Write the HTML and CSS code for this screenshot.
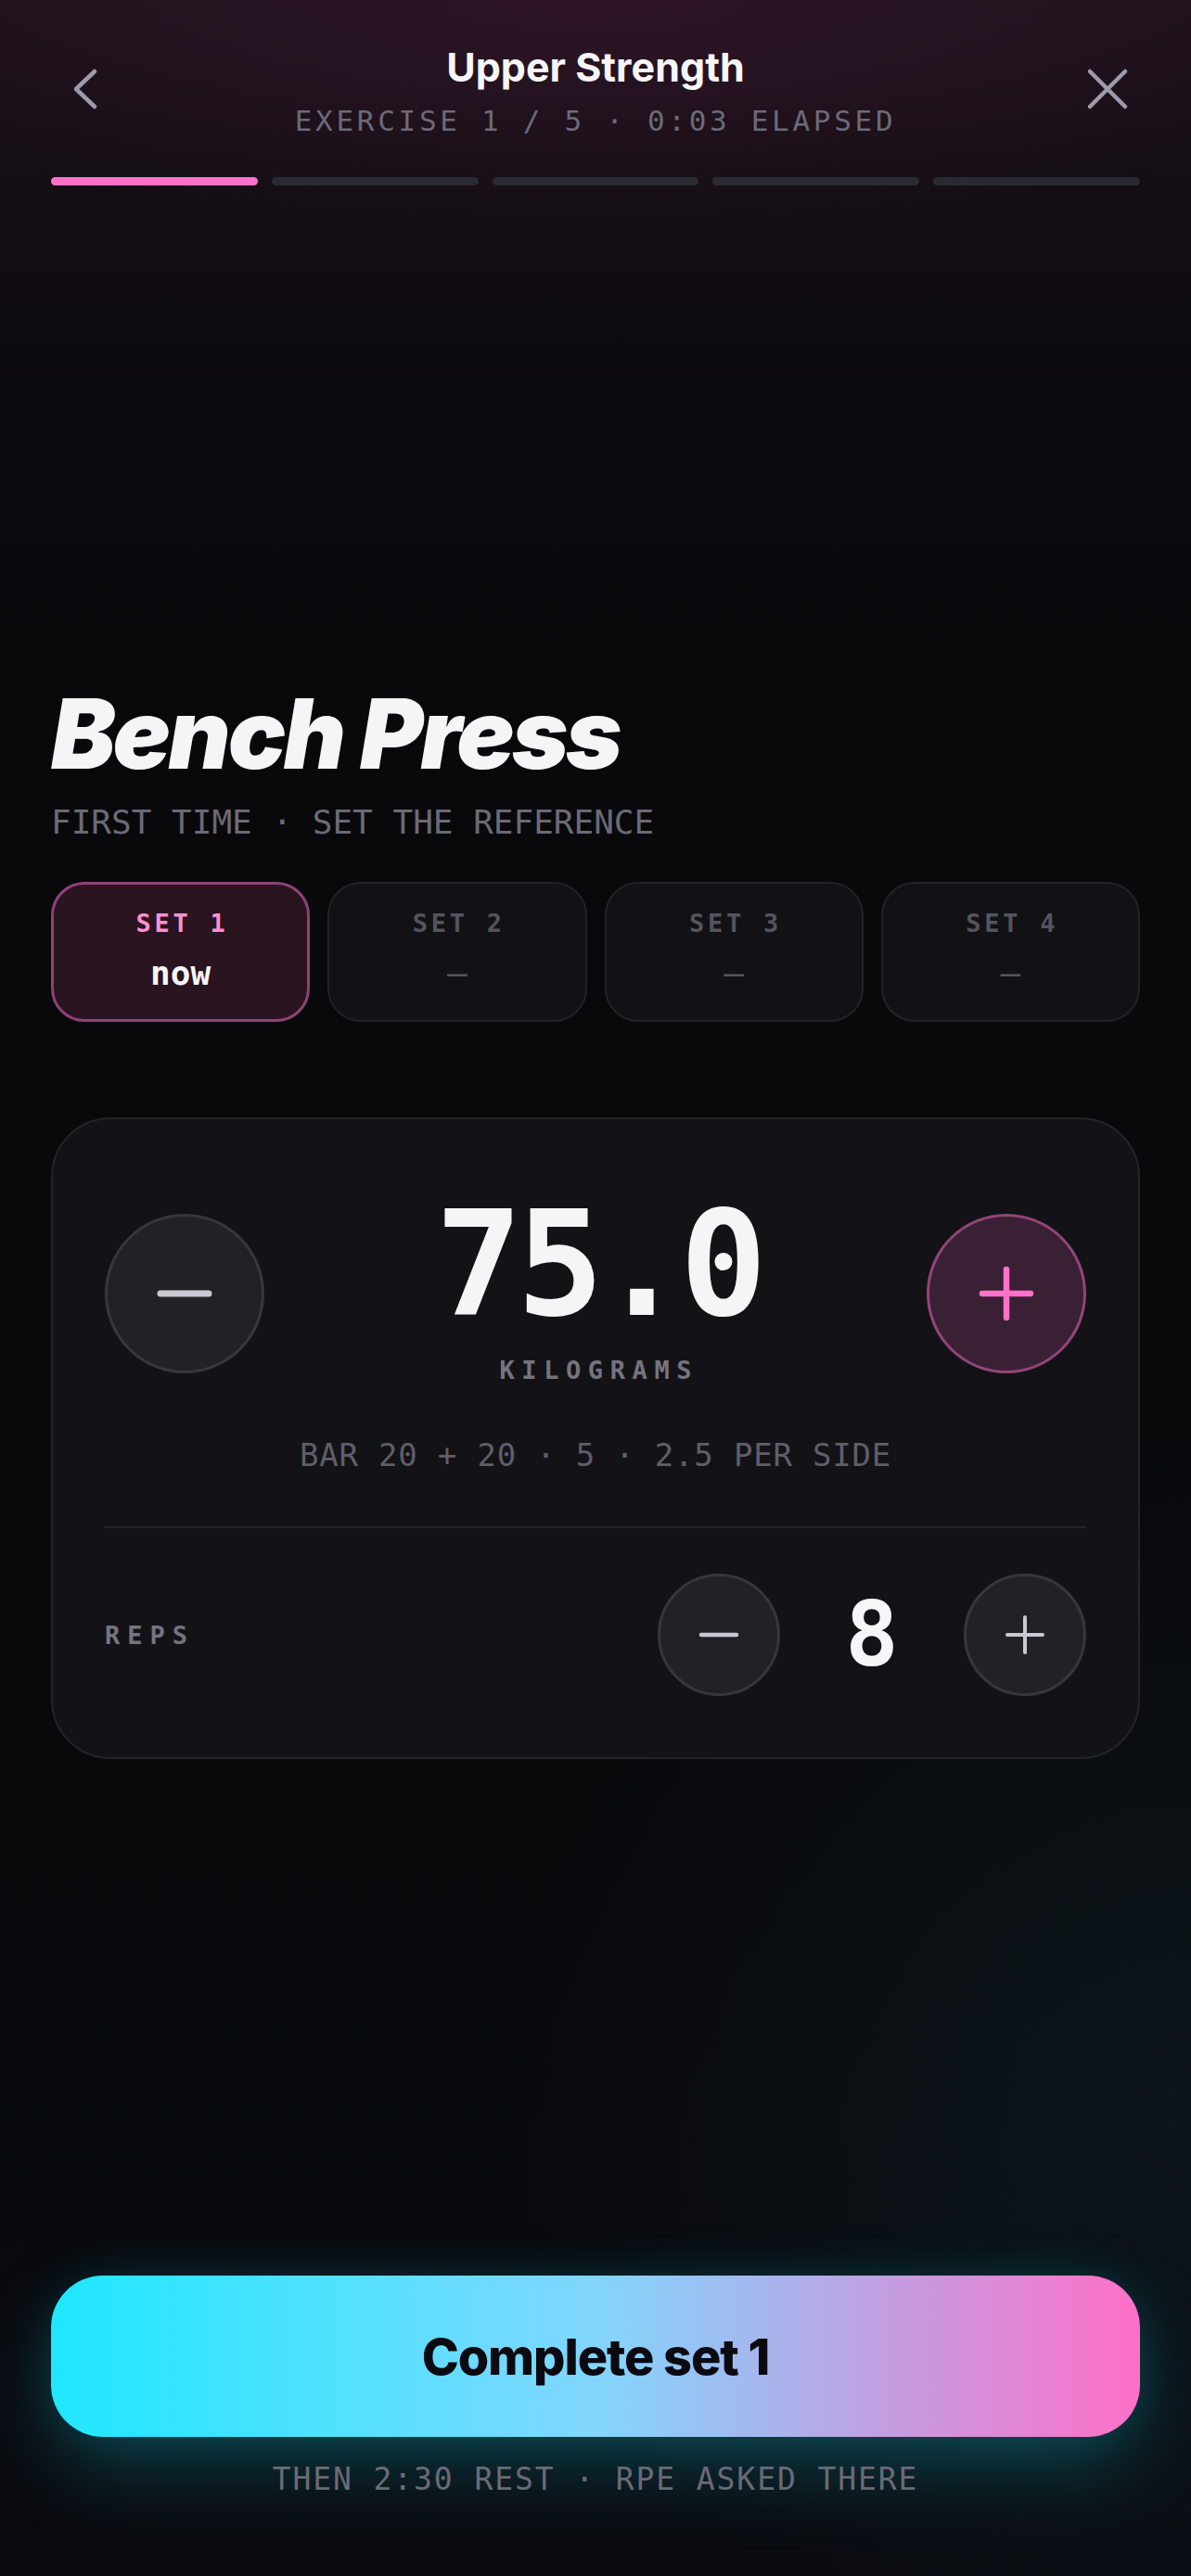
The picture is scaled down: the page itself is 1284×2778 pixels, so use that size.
FILE: index.html
```html
<!DOCTYPE html>
<html lang="en">
<head>
<meta charset="utf-8">
<title>Upper Strength · Bench Press</title>
<link rel="stylesheet" href="styles.css">
</head>
<body>
<div class="app">
  <header class="top">
    <div class="nav">
      <button class="icon-btn back" aria-label="Back">
        <svg width="48" height="48" viewBox="0 0 48 48"><path d="M28 5 L8 24 L28 43" fill="none" stroke="currentColor" stroke-width="4.5" stroke-linecap="round" stroke-linejoin="round"/></svg>
      </button>
      <div class="titles">
        <h2 class="workout">Upper Strength</h2>
        <div class="meta">EXERCISE 1 / 5 · 0:03 ELAPSED</div>
      </div>
      <button class="icon-btn close" aria-label="Close">
        <svg width="48" height="48" viewBox="0 0 48 48"><path d="M5 5 L43 43 M43 5 L5 43" fill="none" stroke="currentColor" stroke-width="4.5" stroke-linecap="round"/></svg>
      </button>
    </div>
    <div class="progress">
      <span class="seg on"></span><span class="seg"></span><span class="seg"></span><span class="seg"></span><span class="seg"></span>
    </div>
  </header>

  <main class="main">
    <h1 class="exercise">Bench Press</h1>
    <div class="hint">FIRST TIME · SET THE REFERENCE</div>

    <div class="sets">
      <div class="set active"><span class="set-label">SET 1</span><span class="set-val">now</span></div>
      <div class="set"><span class="set-label">SET 2</span><span class="set-val dash">—</span></div>
      <div class="set"><span class="set-label">SET 3</span><span class="set-val dash">—</span></div>
      <div class="set"><span class="set-label">SET 4</span><span class="set-val dash">—</span></div>
    </div>

    <section class="card">
      <div class="weight">
        <button class="step-lg minus" aria-label="Decrease weight">
          <svg width="60" height="60" viewBox="0 0 60 60"><path d="M4 30 H56" stroke="currentColor" stroke-width="7" stroke-linecap="round"/></svg>
        </button>
        <div class="wval">
          <div class="num">75.0</div>
          <div class="unit">KILOGRAMS</div>
        </div>
        <button class="step-lg plus" aria-label="Increase weight">
          <svg width="60" height="60" viewBox="0 0 60 60"><path d="M4 30 H56 M30 4 V56" stroke="currentColor" stroke-width="6.5" stroke-linecap="round"/></svg>
        </button>
      </div>
      <div class="plates">BAR 20 + 20 · 5 · 2.5 PER SIDE</div>
      <div class="divider"></div>
      <div class="reps">
        <span class="reps-label">REPS</span>
        <div class="reps-ctrl">
          <button class="step-sm" aria-label="Fewer reps">
            <svg width="44" height="44" viewBox="0 0 44 44"><path d="M3 22 H41" stroke="currentColor" stroke-width="4.5" stroke-linecap="round"/></svg>
          </button>
          <span class="reps-num">8</span>
          <button class="step-sm" aria-label="More reps">
            <svg width="44" height="44" viewBox="0 0 44 44"><path d="M3 22 H41 M22 3 V41" stroke="currentColor" stroke-width="4" stroke-linecap="round"/></svg>
          </button>
        </div>
      </div>
    </section>
  </main>

  <footer class="foot">
    <button class="cta">Complete set 1</button>
    <div class="foot-note">THEN 2:30 REST · RPE ASKED THERE</div>
  </footer>
</div>
</body>
</html>
```

FILE: styles.css
```css
* { box-sizing: border-box; }

html, body {
  margin: 0;
  padding: 0;
}

body {
  background:
    radial-gradient(ellipse 70% 9% at 50% 0%, rgba(60, 24, 50, 0.55) 0%, rgba(60, 24, 50, 0) 100%),
    radial-gradient(circle at 100% 82%, rgba(18, 52, 62, 0.28) 0%, rgba(18, 52, 62, 0) 28%),
    linear-gradient(180deg, #1c1119 0px, #140e14 200px, #0c0b0f 420px, #09090c 700px, #09090c 2000px, #0a0b10 2778px);
  color: #f4f4f6;
  font-family: "DejaVu Sans Mono", monospace;
}

button {
  font: inherit;
  color: inherit;
  background: none;
  border: 0;
  padding: 0;
  margin: 0;
}

.app {
  min-height: 2778px;
  display: flex;
  flex-direction: column;
}

/* header */
.top {
  padding-top: 51px;
}

.nav {
  display: grid;
  grid-template-columns: 1fr auto 1fr;
  padding: 0 66px;
  align-items: start;
}

.icon-btn {
  width: 48px;
  height: 48px;
  margin-top: 21px;
  color: #9d9bab;
  display: flex;
}

.back { justify-self: start; margin-left: 8px; }
.close { justify-self: end; }

.titles {
  text-align: center;
}

.workout {
  margin: 0;
  font-family: Inter, "Liberation Sans", sans-serif;
  font-weight: 700;
  font-size: 43px;
  line-height: 42px;
  color: #f6f6f8;
}

.meta {
  margin-top: 22px;
  font-size: 31px;
  line-height: 31px;
  letter-spacing: 3.7px;
  color: #6b6a78;
}

.progress {
  margin: 45px 55px 0;
  display: flex;
  gap: 15px;
}

.seg {
  flex: 1;
  height: 9px;
  border-radius: 5px;
  background: #2a2a32;
}

.seg.on { background: #ff70c9; }

/* main */
.main {
  margin-top: 539px;
  padding: 0 55px;
}

.exercise {
  margin: 0;
  font-family: Inter, "Liberation Sans", sans-serif;
  font-style: italic;
  font-weight: 900;
  font-size: 104px;
  line-height: 104px;
  letter-spacing: -0.028em;
  color: #f5f5f6;
}

.hint {
  margin-top: 26px;
  font-size: 36px;
  line-height: 36px;
  color: #6b6a77;
}

.sets {
  margin-top: 46px;
  display: grid;
  grid-template-columns: repeat(4, 1fr);
  gap: 19px;
}

.set {
  height: 151px;
  border: 2px solid #222228;
  background: #121216;
  border-radius: 36px;
  padding-top: 29px;
  display: flex;
  flex-direction: column;
  align-items: center;
  gap: 23px;
}

.set.active {
  border: 3px solid #8e4276;
  background: #29141f;
  padding-top: 28px;
}

.set-label {
  font-weight: 700;
  font-size: 27px;
  line-height: 27px;
  letter-spacing: 3.7px;
  margin-right: -3.7px;
  color: #55545e;
}

.active .set-label { color: #ff8fd2; }

.set-val {
  font-weight: 700;
  font-size: 36px;
  line-height: 36px;
  color: #f6f6f8;
}

.set-val.dash {
  font-weight: 400;
  color: #55545e;
}

/* card */
.card {
  margin-top: 103px;
  border: 2px solid #232329;
  background: #131317;
  border-radius: 64px;
  padding: 91px 56px 66px;
}

.weight {
  display: flex;
  align-items: center;
  justify-content: space-between;
}

.step-lg {
  width: 172px;
  height: 172px;
  border-radius: 50%;
  display: flex;
  align-items: center;
  justify-content: center;
}

.step-lg.minus {
  background: #222226;
  border: 3px solid #37373d;
  color: #c9c9d3;
}

.step-lg.plus {
  background: #3a2035;
  border: 3px solid #924579;
  color: #ff70c9;
}

.wval {
  display: flex;
  flex-direction: column;
  align-items: center;
  gap: 34px;
}

.num {
  font-weight: 700;
  font-size: 156px;
  line-height: 132px;
  letter-spacing: -6px;
  margin-right: -6px;
  color: #f5f5f6;
}

.unit {
  font-weight: 700;
  font-size: 27px;
  line-height: 27px;
  letter-spacing: 7.6px;
  margin-right: -7.6px;
  color: #76747f;
}

.plates {
  margin-top: 61px;
  text-align: center;
  font-size: 34px;
  line-height: 34px;
  letter-spacing: 0.8px;
  color: #5f5e6a;
}

.divider {
  margin-top: 60px;
  height: 2px;
  background: #232329;
}

.reps {
  margin-top: 49px;
  display: flex;
  align-items: center;
  justify-content: space-between;
}

.reps-label {
  font-weight: 700;
  font-size: 27px;
  line-height: 27px;
  letter-spacing: 8px;
  color: #76747f;
}

.reps-ctrl {
  display: flex;
  align-items: center;
}

.step-sm {
  width: 132px;
  height: 132px;
  border-radius: 50%;
  background: #222226;
  border: 3px solid #36363c;
  color: #c9c9d3;
  display: flex;
  align-items: center;
  justify-content: center;
}

.reps-num {
  width: 198px;
  text-align: center;
  font-weight: 700;
  font-size: 96px;
  line-height: 96px;
  color: #f6f6f8;
}

/* footer */
.foot {
  margin-top: auto;
  padding: 0 55px 88px;
}

.cta {
  display: block;
  width: 100%;
  height: 174px;
  border-radius: 56px;
  background: linear-gradient(90deg, #1fe7ff 0%, #55e0ff 28%, #82d6fd 50%, #bba4e4 74%, #ff6fc8 100%);
  box-shadow: 0 34px 90px -6px rgba(24, 210, 232, 0.28), 0 0 50px rgba(24, 210, 232, 0.10);
  font-family: Inter, "Liberation Sans", sans-serif;
  font-weight: 800;
  font-size: 54px;
  letter-spacing: -0.02em;
  color: #0a0a10;
}

.foot-note {
  margin-top: 29px;
  text-align: center;
  font-size: 33px;
  line-height: 33px;
  letter-spacing: 1.9px;
  color: #6b6a76;
}
```
